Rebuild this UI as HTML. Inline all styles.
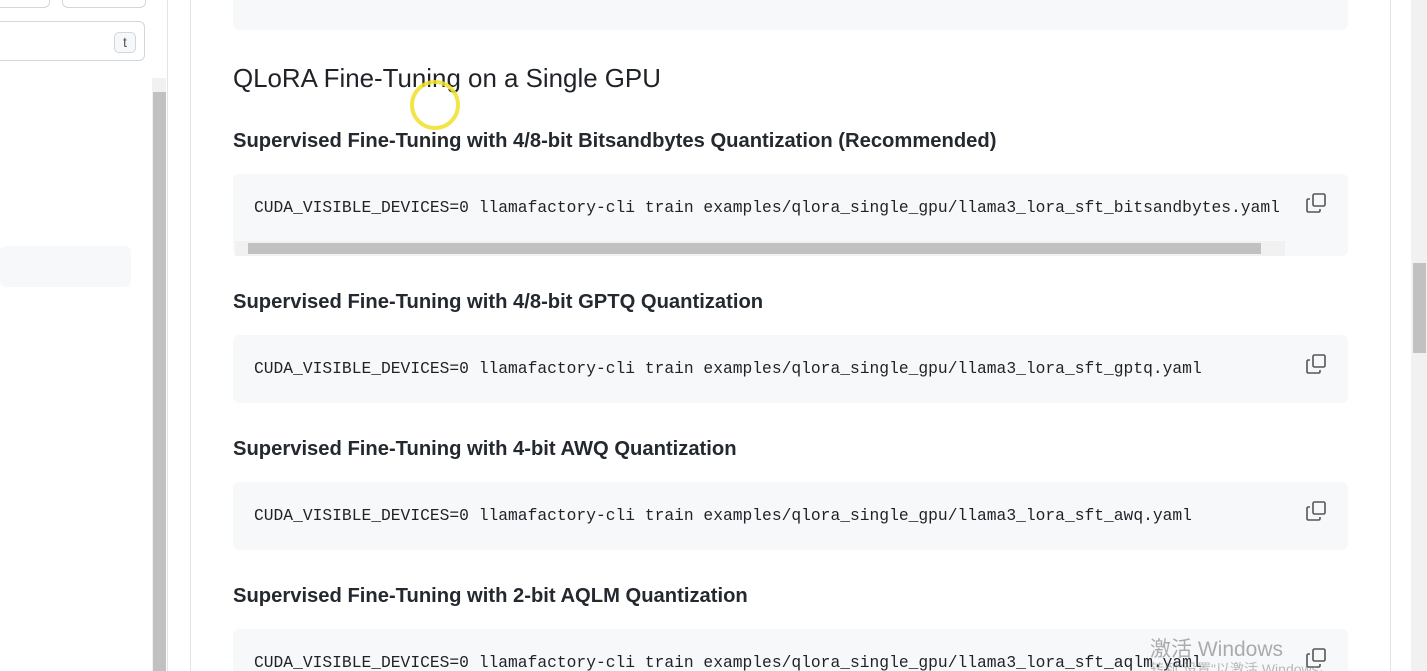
<!DOCTYPE html>
<html style="overflow:hidden;height:671px"><head><meta charset="utf-8"><style>
*{box-sizing:border-box}
body{margin:0;width:1427px;height:671px;overflow:hidden;background:#fff;font-family:"Liberation Sans","Noto Sans CJK SC",sans-serif;color:#1f2328;position:relative}
.a{position:absolute}
.code{position:absolute;left:233px;width:1115px;background:#f6f8fa;border-radius:6px}
.code span{position:absolute;left:21px;font-family:"Liberation Mono",monospace;font-size:16.3px;color:#1f2328;white-space:pre}
.cp{position:absolute;right:21px;width:22px;height:22px}
h2,h3{position:absolute;left:233px;margin:0;font-weight:600;white-space:nowrap}
h2{font-size:25.9px;font-weight:normal}
h3{font-size:20.2px;color:#24292f}
</style></head><body>
<div class="a" style="left:-10px;top:-10px;width:60px;height:18px;border:1px solid #d0d7de;border-radius:6px"></div>
<div class="a" style="left:62px;top:-10px;width:84px;height:18px;border:1px solid #d0d7de;border-radius:6px"></div>
<div class="a" style="left:-10px;top:21px;width:155px;height:40px;border:1px solid #d0d7de;border-radius:6px"></div>
<div class="a" style="left:114px;top:32px;width:22px;height:21px;background:#f6f8fa;border:1px solid #d0d7de;border-radius:5px;font-size:14px;text-align:center;line-height:19px;color:#555">t</div>
<div class="a" style="left:0;top:246px;width:131px;height:41px;background:#f6f8fa;border-radius:6px"></div>
<div class="a" style="left:152px;top:78px;width:14px;height:593px;background:#f1f1f1"></div>
<div class="a" style="left:153px;top:92px;width:13px;height:579px;background:#c1c1c1"></div>
<div class="a" style="left:167px;top:0;width:1px;height:671px;background:#e1e4e8"></div>
<div class="a" style="left:190px;top:0;width:1px;height:671px;background:#e1e4e8"></div>
<div class="a" style="left:1390px;top:0;width:1px;height:671px;background:#e1e4e8"></div>
<div class="a" style="left:1411px;top:0;width:16px;height:671px;background:#f1f1f1"></div>
<div class="a" style="left:1413px;top:263px;width:13px;height:90px;background:#c1c1c1"></div>

<div class="code" style="top:-10px;height:40px"></div>
<h2 style="top:65px">QLoRA Fine-Tuning on a Single GPU</h2>
<h3 style="top:130px">Supervised Fine-Tuning with 4/8-bit Bitsandbytes Quantization (Recommended)</h3>
<div class="code" style="top:174px;height:82px"><span style="top:24px">CUDA_VISIBLE_DEVICES=0 llamafactory-cli train examples/qlora_single_gpu/llama3_lora_sft_bitsandbytes.yaml</span>
<svg class="cp" style="top:18px" viewBox="0 0 22 22" fill="none" stroke="#555" stroke-width="1.6"><rect x="8" y="2" width="12" height="12" rx="1.5"/><path d="M5 7H3.5Q2 7 2 8.5V18.5Q2 20 3.5 20H13.5Q15 20 15 18.5V17"/></svg>
<div class="a" style="left:2px;top:67px;width:1050px;height:15px;background:#f1f1f1"></div>
<div class="a" style="left:15px;top:69px;width:1013px;height:11px;background:#c1c1c1"></div>
</div>
<h3 style="top:291px">Supervised Fine-Tuning with 4/8-bit GPTQ Quantization</h3>
<div class="code" style="top:335px;height:68px"><span style="top:24px">CUDA_VISIBLE_DEVICES=0 llamafactory-cli train examples/qlora_single_gpu/llama3_lora_sft_gptq.yaml</span>
<svg class="cp" style="top:18px" viewBox="0 0 22 22" fill="none" stroke="#555" stroke-width="1.6"><rect x="8" y="2" width="12" height="12" rx="1.5"/><path d="M5 7H3.5Q2 7 2 8.5V18.5Q2 20 3.5 20H13.5Q15 20 15 18.5V17"/></svg></div>
<h3 style="top:438px">Supervised Fine-Tuning with 4-bit AWQ Quantization</h3>
<div class="code" style="top:482px;height:68px"><span style="top:24px">CUDA_VISIBLE_DEVICES=0 llamafactory-cli train examples/qlora_single_gpu/llama3_lora_sft_awq.yaml</span>
<svg class="cp" style="top:18px" viewBox="0 0 22 22" fill="none" stroke="#555" stroke-width="1.6"><rect x="8" y="2" width="12" height="12" rx="1.5"/><path d="M5 7H3.5Q2 7 2 8.5V18.5Q2 20 3.5 20H13.5Q15 20 15 18.5V17"/></svg></div>
<h3 style="top:585px">Supervised Fine-Tuning with 2-bit AQLM Quantization</h3>
<div class="code" style="top:629px;height:42px;border-radius:6px 6px 0 0"><span style="top:24px">CUDA_VISIBLE_DEVICES=0 llamafactory-cli train examples/qlora_single_gpu/llama3_lora_sft_aqlm.yaml</span>
<svg class="cp" style="top:18px" viewBox="0 0 22 22" fill="none" stroke="#555" stroke-width="1.6"><rect x="8" y="2" width="12" height="12" rx="1.5"/><path d="M5 7H3.5Q2 7 2 8.5V18.5Q2 20 3.5 20H13.5Q15 20 15 18.5V17"/></svg></div>
<div class="a" style="left:1150px;top:633px;font-size:21px;color:rgba(120,120,120,.6)">激活 Windows</div>
<div class="a" style="left:1150px;top:659px;font-size:14px;color:rgba(120,120,120,.5)">转到"设置"以激活 Windows。</div>
<div class="a" style="left:410px;top:80px;width:50px;height:50px;border-radius:50%;border:4px solid rgba(240,225,40,.85)"></div>
</body></html>
